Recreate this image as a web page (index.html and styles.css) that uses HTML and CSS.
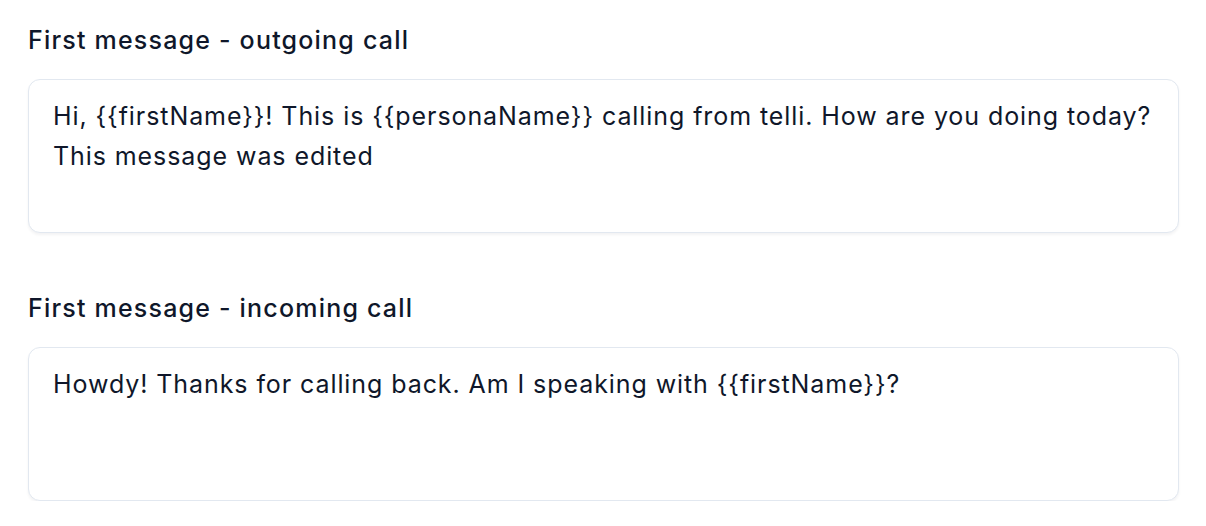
FILE: index.html
```html
<!DOCTYPE html>
<html lang="en">
<head>
<meta charset="utf-8">
<title>First messages</title>
<link rel="stylesheet" href="styles.css">
</head>
<body>
<main class="form">
  <div class="field">
    <label class="label" for="outgoing">First message - outgoing call</label>
    <textarea id="outgoing" class="message" rows="3">Hi, {{firstName}}! This is {{personaName}} calling from telli. How are you doing today?
This message was edited</textarea>
  </div>
  <div class="field">
    <label class="label" for="incoming">First message - incoming call</label>
    <textarea id="incoming" class="message" rows="3">Howdy! Thanks for calling back. Am I speaking with {{firstName}}?</textarea>
  </div>
</main>
</body>
</html>
```

FILE: styles.css
```css
* { box-sizing: border-box; }

html, body {
  margin: 0;
  padding: 0;
  background: #ffffff;
}

body {
  font-family: Inter, "Noto Sans", "Liberation Sans", sans-serif;
  color: #0f172a;
}

.form {
  display: flex;
  flex-direction: column;
  gap: 59px;
  padding: 24px 27px 0 28px;
}

.field {
  display: flex;
  flex-direction: column;
  gap: 23px;
}

.label {
  font-size: 25px;
  line-height: 32px;
  font-weight: 500;
  letter-spacing: 1.2px;
  color: #0f172a;
}

.message {
  display: block;
  width: 100%;
  height: 154px;
  margin: 0;
  padding: 16px 24px;
  border: 1px solid #e2e8f0;
  border-radius: 12px;
  box-shadow: 0 2px 3px rgba(15, 23, 42, 0.05);
  background: #ffffff;
  font-family: inherit;
  font-size: 25px;
  line-height: 40px;
  letter-spacing: 0.92px;
  color: #0f172a;
  resize: none;
  outline: none;
  overflow: hidden;
}
```
